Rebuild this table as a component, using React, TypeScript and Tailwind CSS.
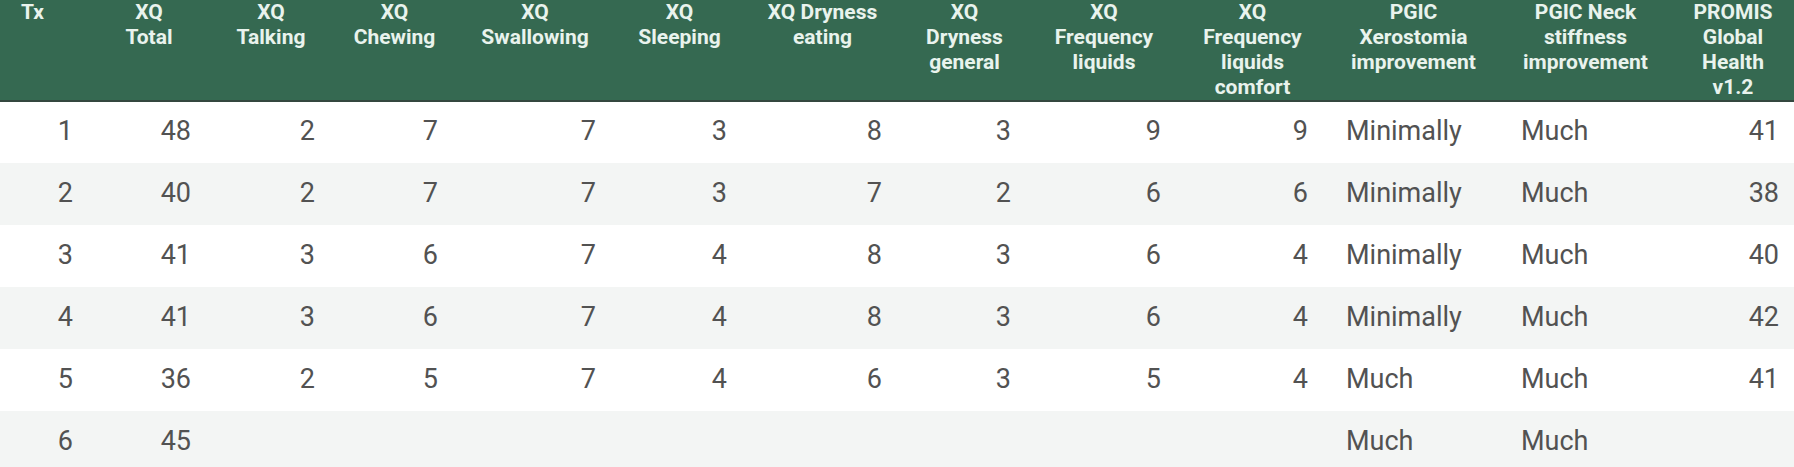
import React from 'react';

type Col = {
  key: string;
  lines: string[];
  width: number;
  kind: 'num' | 'text';
};

const columns: Col[] = [
  { key: 'tx', lines: ['Tx'], width: 89, kind: 'num' },
  { key: 'total', lines: ['XQ', 'Total'], width: 120, kind: 'num' },
  { key: 'talking', lines: ['XQ', 'Talking'], width: 124, kind: 'num' },
  { key: 'chewing', lines: ['XQ', 'Chewing'], width: 123, kind: 'num' },
  { key: 'swallowing', lines: ['XQ', 'Swallowing'], width: 158, kind: 'num' },
  { key: 'sleeping', lines: ['XQ', 'Sleeping'], width: 131, kind: 'num' },
  { key: 'dryEat', lines: ['XQ Dryness', 'eating'], width: 155, kind: 'num' },
  { key: 'dryGen', lines: ['XQ', 'Dryness', 'general'], width: 129, kind: 'num' },
  { key: 'freqLiq', lines: ['XQ', 'Frequency', 'liquids'], width: 150, kind: 'num' },
  { key: 'freqCom', lines: ['XQ', 'Frequency', 'liquids', 'comfort'], width: 147, kind: 'num' },
  { key: 'xero', lines: ['PGIC', 'Xerostomia', 'improvement'], width: 175, kind: 'text' },
  { key: 'neck', lines: ['PGIC Neck', 'stiffness', 'improvement'], width: 169, kind: 'text' },
  { key: 'promis', lines: ['PROMIS', 'Global', 'Health', 'v1.2'], width: 124, kind: 'num' },
];

const rows: string[][] = [
  ['1', '48', '2', '7', '7', '3', '8', '3', '9', '9', 'Minimally', 'Much', '41'],
  ['2', '40', '2', '7', '7', '3', '7', '2', '6', '6', 'Minimally', 'Much', '38'],
  ['3', '41', '3', '6', '7', '4', '8', '3', '6', '4', 'Minimally', 'Much', '40'],
  ['4', '41', '3', '6', '7', '4', '8', '3', '6', '4', 'Minimally', 'Much', '42'],
  ['5', '36', '2', '5', '7', '4', '6', '3', '5', '4', 'Much', 'Much', '41'],
  ['6', '45', '', '', '', '', '', '', '', '', 'Much', 'Much', ''],
];

export default function App() {
  return (
    <div className="w-[1794px] h-[467px] overflow-hidden bg-white font-['Roboto',sans-serif]">
      <table className="table-fixed border-collapse w-[1794px]">
        <colgroup>
          {columns.map(c => (
            <col key={c.key} style={{ width: c.width }} />
          ))}
        </colgroup>
        <thead>
          <tr className="bg-[#356951] border-b-2 border-[#34473f]">
            {columns.map(c => (
              <th
                key={c.key}
                className={`h-[101px] align-top p-0 text-[21px] leading-[25px] font-bold text-[#e9f3ed] whitespace-nowrap ${c.key === 'tx' ? 'text-left pl-[21px]' : c.key === 'promis' ? 'text-center pl-[2px]' : 'text-center'}`}
              >
                {c.lines.map((l, i) => (
                  <div key={i}>{l}</div>
                ))}
              </th>
            ))}
          </tr>
        </thead>
        <tbody>
          {rows.map((r, ri) => (
            <tr key={ri} className={ri % 2 === 0 ? 'bg-white' : 'bg-[#f3f5f4]'}>
              {r.map((v, ci) => {
                const col = columns[ci];
                return (
                  <td
                    key={col.key}
                    className={`h-[62px] align-middle pb-[3px] text-[27px] leading-[32px] text-[#525252] whitespace-nowrap ${col.kind === 'text' ? 'text-left pl-[20px]' : col.key === 'promis' ? 'text-right pr-[15px]' : col.key === 'tx' ? 'text-right pr-[16px]' : 'text-right pr-[18px]'}`}
                  >
                    {v}
                  </td>
                );
              })}
            </tr>
          ))}
        </tbody>
      </table>
    </div>
  );
}
